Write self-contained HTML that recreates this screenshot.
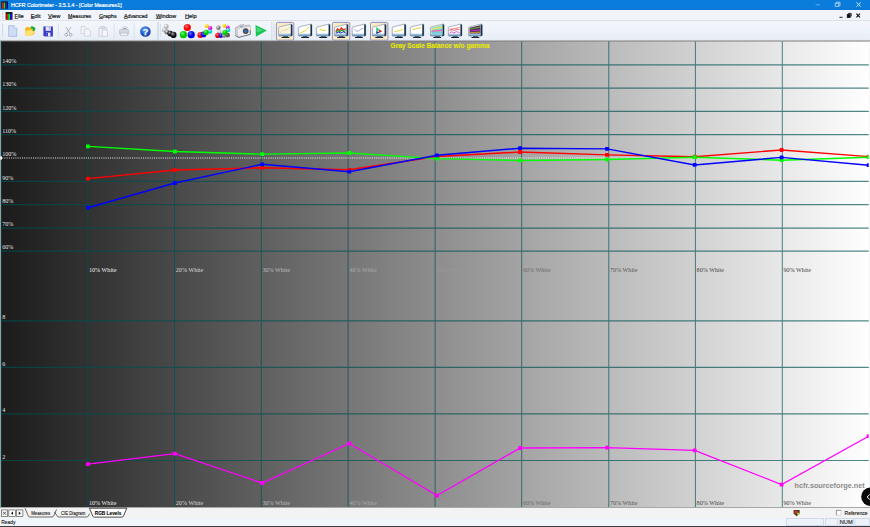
<!DOCTYPE html>
<html><head><meta charset="utf-8"><title>HCFR Colorimeter</title>
<style>
html,body{margin:0;padding:0}
body{width:870px;height:527px;overflow:hidden;position:relative;background:#eef2f9;font-family:"Liberation Sans",sans-serif;color:#000}
.abs{position:absolute}
svg{display:block}
#title{left:0;top:0;width:870px;height:10.1px;background:linear-gradient(#0a7ddc,#0a7ddc 80%,#0874d0)}
#title span{position:absolute;left:10.9px;top:2.2px;font-size:5.9px;line-height:7px;color:#fff;white-space:nowrap;transform:scaleX(0.885);transform-origin:0 0;-webkit-text-stroke:0.2px #fff}
#menu{left:0;top:10.1px;width:870px;height:10.2px;background:#f1f5fb}
#menu span{position:absolute;top:2.7px;font-size:5.7px;line-height:7px;white-space:nowrap;color:#111;-webkit-text-stroke:0.18px #111;transform-origin:0 0}
#menu u{text-decoration-thickness:0.4px;text-underline-offset:0.2px;text-decoration-color:rgba(0,0,0,0.6)}
#tbsvg{position:absolute;left:0;top:20px}
#chart{position:absolute;left:0;top:41px}
#ovl{position:absolute;left:0;top:0;pointer-events:none}
#tabs{left:0;top:507px;width:870px;height:11px;background:#f3f3f3;border-top:1px solid #a8a8a8;box-sizing:border-box}
#tabs span{position:absolute;top:2px;font-size:5.1px;line-height:6px;white-space:nowrap;color:#222}
#status{left:0;top:518px;width:870px;height:8px;background:#f0f4fb}
#status span{position:absolute;top:1px;font-size:5.6px;line-height:7px;white-space:nowrap;color:#111}
#bot{left:0;top:525.6px;width:870px;height:1.4px;background:#3c3c3c}
</style></head><body>
<div id="title" class="abs"><span>HCFR Colorimeter - 3.5.1.4 - [Color Measures1]</span></div>
<div id="menu" class="abs">
<span style="left:14.6px"><u>F</u>ile</span><span style="left:30.8px"><u>E</u>dit</span><span style="left:48.1px"><u>V</u>iew</span><span style="left:68.4px;transform:scaleX(0.93)"><u>M</u>easures</span><span style="left:99px;transform:scaleX(0.95)"><u>G</u>raphs</span><span style="left:124.3px;transform:scaleX(0.93)"><u>A</u>dvanced</span><span style="left:155.9px"><u>W</u>indow</span><span style="left:185px"><u>H</u>elp</span>
</div>
<svg id="tbsvg" viewBox="0 20 870 22" width="870" height="22"><defs><linearGradient id="tbg" x1="0" x2="0" y1="0" y2="1"><stop offset="0" stop-color="#f4f7fc"/><stop offset="0.5" stop-color="#eef3fa"/><stop offset="1" stop-color="#e6ecf5"/></linearGradient><radialGradient id="hb" cx="0.4" cy="0.3" r="0.8"><stop offset="0" stop-color="#5aa0f0"/><stop offset="0.6" stop-color="#1c5ad0"/><stop offset="1" stop-color="#0a2c90"/></radialGradient><radialGradient id="sr" cx="0.38" cy="0.32" r="0.75"><stop offset="0" stop-color="#ff7070"/><stop offset="0.55" stop-color="#f00000"/><stop offset="1" stop-color="#f00000"/></radialGradient><radialGradient id="sg" cx="0.38" cy="0.32" r="0.75"><stop offset="0" stop-color="#60ff60"/><stop offset="0.55" stop-color="#00c800"/><stop offset="1" stop-color="#00c800"/></radialGradient><radialGradient id="sb" cx="0.38" cy="0.32" r="0.75"><stop offset="0" stop-color="#6070ff"/><stop offset="0.55" stop-color="#0000e0"/><stop offset="1" stop-color="#0000e0"/></radialGradient><radialGradient id="sk" cx="0.38" cy="0.32" r="0.75"><stop offset="0" stop-color="#a0a0a0"/><stop offset="0.55" stop-color="#101010"/><stop offset="1" stop-color="#101010"/></radialGradient><radialGradient id="sw" cx="0.38" cy="0.32" r="0.75"><stop offset="0" stop-color="#ffffff"/><stop offset="0.55" stop-color="#b4b4b4"/><stop offset="1" stop-color="#b4b4b4"/></radialGradient><radialGradient id="sw2" cx="0.38" cy="0.32" r="0.75"><stop offset="0" stop-color="#e8e8e8"/><stop offset="0.55" stop-color="#787878"/><stop offset="1" stop-color="#787878"/></radialGradient><radialGradient id="sy" cx="0.38" cy="0.32" r="0.75"><stop offset="0" stop-color="#ffff90"/><stop offset="0.55" stop-color="#f0d000"/><stop offset="1" stop-color="#f0d000"/></radialGradient><radialGradient id="sm" cx="0.38" cy="0.32" r="0.75"><stop offset="0" stop-color="#ff90ff"/><stop offset="0.55" stop-color="#e000e0"/><stop offset="1" stop-color="#e000e0"/></radialGradient><radialGradient id="sc" cx="0.38" cy="0.32" r="0.75"><stop offset="0" stop-color="#a0ffff"/><stop offset="0.55" stop-color="#00c8d0"/><stop offset="1" stop-color="#00c8d0"/></radialGradient><linearGradient id="mon" x1="0" x2="0" y1="0" y2="1"><stop offset="0" stop-color="#f4f6f9"/><stop offset="0.72" stop-color="#e4ecf4"/><stop offset="0.9" stop-color="#8fb4d8"/><stop offset="1" stop-color="#5f8cbc"/></linearGradient></defs><rect x="0" y="20" width="870" height="22" fill="url(#tbg)"/><rect x="0" y="20" width="870" height="0.7" fill="#d4d8e0"/><rect x="157.2" y="22" width="1.6" height="18" fill="#c9d6ea" opacity="0.9"/><rect x="271" y="22" width="1.4" height="18" fill="#d5dfee" opacity="0.9"/><line x1="2.6" x2="2.6" y1="23.8" y2="36.6" stroke="#a8b4c8" stroke-width="0.9" stroke-dasharray="0.9 0.9"/><line x1="160.4" x2="160.4" y1="23.8" y2="36.6" stroke="#b4bed0" stroke-width="0.8" stroke-dasharray="0.9 0.9"/><line x1="274" x2="274" y1="23.8" y2="36.6" stroke="#b4bed0" stroke-width="0.8" stroke-dasharray="0.9 0.9"/><line x1="58.4" x2="58.4" y1="23.5" y2="38" stroke="#d3d9e4" stroke-width="0.7"/><line x1="114.2" x2="114.2" y1="23.5" y2="38" stroke="#d3d9e4" stroke-width="0.7"/><line x1="134.2" x2="134.2" y1="23.5" y2="38" stroke="#d3d9e4" stroke-width="0.7"/><path d="M8.6 25.6 L14 25.6 L16.8 28.4 L16.8 36.4 L8.6 36.4Z" fill="#cfdcf4" stroke="#9cb2e0" stroke-width="0.7"/><path d="M14 25.6 L14 28.4 L16.8 28.4" fill="#e8effb" stroke="#9cb2e0" stroke-width="0.5"/><path d="M25 28.2 L27.4 26.8 L30 27.6 L33.6 27.6 L35 30.4 L34.2 34.2 L31 35.6 L25.6 35.4Z" fill="#f6b820"/><path d="M25.4 31 L33.8 29.6 L35.2 30.8 L32 35.4 L25.8 35.6Z" fill="#ffe070"/><path d="M30.6 26.4 L33.4 26.4 L35.6 28.6 L34.6 30.8 L32.4 31.2 L33 29 L30.8 28.2Z" fill="#18a838"/><path d="M43.4 26.6 L52.9 26.6 L52.9 36.4 L44.6 36.4 L43.4 35.2Z" fill="#3a3ac6"/><rect x="45.6" y="26.6" width="5.2" height="4.2" fill="#e4e8f6"/><rect x="46" y="32.6" width="4.4" height="3.8" fill="#e8ecf8"/><rect x="46.2" y="32.8" width="1.8" height="3.4" fill="#3a3ac6"/><rect x="48.8" y="27.2" width="1" height="2.2" fill="#9aa0d8"/><g fill="none" stroke="#9aa0a8" stroke-width="0.8"><path d="M65.8 27 L70.4 33.6"/><path d="M71 27 L66.4 33.6"/><circle cx="66.2" cy="34.8" r="1.4"/><circle cx="70.6" cy="34.8" r="1.4"/></g><g fill="#f2f4f8" stroke="#c9ccd4" stroke-width="0.7"><path d="M81 26.6 L85 26.6 L87 28.6 L87 33.6 L81 33.6Z"/><path d="M84.4 29 L88.4 29 L90.6 31.2 L90.6 36.2 L84.4 36.2Z"/></g><g fill="#eceef3" stroke="#c6c9d2" stroke-width="0.7"><path d="M98.8 27.8 L106.8 27.8 L106.8 36.2 L98.8 36.2Z"/><rect x="101" y="26.6" width="3.6" height="1.8" fill="#dcdfe6"/><path d="M102.4 30 L105.8 30 L107.4 31.6 L107.4 36.4 L102.4 36.4Z" fill="#f6f7fa"/></g><g stroke="#b4b8c0" stroke-width="0.6"><path d="M121.6 30 L122.8 27 L127 27 L127.8 30Z" fill="#f4f5f8"/><path d="M119.4 30.4 Q119.4 29.6 120.4 29.6 L127.8 29.6 Q128.8 29.6 128.8 30.4 L128.8 34 L119.4 34Z" fill="#d4d7dd"/><path d="M120.6 33 L127.4 33 L127.4 35.6 L120.6 35.6Z" fill="#f0f1f4"/></g><rect x="123.4" y="28" width="2.6" height="0.8" fill="#7c8088"/><circle cx="145.4" cy="31.5" r="5.3" fill="url(#hb)"/><text x="145.5" y="34.7" text-anchor="middle" font-family="'Liberation Sans',sans-serif" font-weight="bold" font-size="9" fill="#fff" stroke="#fff" stroke-width="0.25">?</text><circle cx="166.2" cy="26.6" r="2.5" fill="url(#sw)"/><circle cx="164.6" cy="30" r="2.5" fill="url(#sw)"/><circle cx="167" cy="32" r="2.5" fill="url(#sw2)"/><circle cx="170.2" cy="33.6" r="2.8" fill="url(#sk)"/><circle cx="173.5" cy="34.9" r="3.1" fill="url(#sk)"/><circle cx="187.3" cy="27.5" r="3.6" fill="url(#sr)"/><circle cx="183.4" cy="34.7" r="3.6" fill="url(#sg)"/><circle cx="191.2" cy="34.7" r="3.6" fill="url(#sb)"/><circle cx="206.8" cy="26" r="2.1" fill="url(#sy)"/><circle cx="210.2" cy="28.2" r="2.1" fill="url(#sm)"/><circle cx="210" cy="31.6" r="2.2" fill="url(#sc)"/><circle cx="200.4" cy="35" r="3" fill="url(#sr)"/><circle cx="203.6" cy="34.4" r="2.8" fill="url(#sb)"/><circle cx="206.2" cy="32.4" r="2.6" fill="url(#sg)"/><circle cx="218.5" cy="27.8" r="2.2" fill="url(#sw2)"/><circle cx="219.4" cy="32.2" r="2" fill="url(#sw)"/><circle cx="224.5" cy="25.7" r="2" fill="url(#sy)"/><circle cx="227.7" cy="27.4" r="2" fill="url(#sm)"/><circle cx="228.2" cy="30.2" r="2.1" fill="url(#sc)"/><circle cx="217.8" cy="35.4" r="2.6" fill="url(#sr)"/><circle cx="221" cy="35.6" r="2.3" fill="url(#sb)"/><circle cx="227.6" cy="35.2" r="2.4" fill="#6a5a58"/><circle cx="224.2" cy="35.4" r="2.3" fill="url(#sw2)"/><circle cx="225" cy="32.4" r="2.6" fill="url(#sg)"/><path d="M235.4 27.8 L238 26.4 L240 25 L244 24.6 L245 25.6 L249.4 25 L250.2 26 L250.2 34.4 L238.6 37.4 L235.4 35.6Z" fill="#cfd0d4" stroke="#909296" stroke-width="0.5"/><path d="M237.6 28.9 L250 26.7 L250 34.3 L238.7 37.1Z" fill="#eeeef1"/><path d="M235.5 35.6 L238.6 37.4 L250.2 34.4 L250.2 30" fill="none" stroke="#5a5a5e" stroke-width="0.7"/><circle cx="245.7" cy="31.1" r="2.9" fill="#4c4c52"/><circle cx="245.7" cy="31.2" r="1.2" fill="#1a7ae8"/><rect x="240.2" y="26" width="2.6" height="1.2" fill="#8a9ab0"/><path d="M255.5 24.9 L266.8 30.6 L255.9 36.7Z" fill="#14c450"/><path d="M256.6 26.8 L263.6 30.4 L256.8 32.6Z" fill="#5fe08a" opacity="0.7"/><rect x="276.4" y="22.4" width="17.4" height="17.8" rx="1.4" fill="#fdebc2" stroke="#7476cc" stroke-width="0.8"/><path d="M279.3 26.9 L291.0 24.1 Q292.20000000000005 23.9 292.20000000000005 25 L292.20000000000005 35.2 Q292.20000000000005 36.1 291.20000000000005 36.1 L279.5 36.1 Q278.6 36.1 278.6 35.2 L278.6 27.8 Q278.6 27.1 279.3 26.9Z" fill="url(#mon)" stroke="#77828f" stroke-width="0.55"/><path d="M290.70000000000005 24.3 L292.3 24.7 L292.3 35.6 L290.70000000000005 36.1Z" fill="#14304e"/><path d="M279.6 27.8 L290.40000000000003 25.3 L290.40000000000003 33.6 L279.6 33.6Z" fill="#fbf3dc"/><rect x="283.0" y="36.1" width="5" height="1" fill="#3d5a7a"/><rect x="281.40000000000003" y="36.9" width="8" height="1" rx="0.3" fill="#1a222e"/><g transform="translate(278.6,0)"><path d="M2 32.5 Q4 29.5 6 30 T10.8 27.5" fill="none" stroke="#d8a060" stroke-width="0.7" stroke-dasharray="1.2 0.8"/></g><path d="M299.0 26.9 L310.7 24.1 Q311.90000000000003 23.9 311.90000000000003 25 L311.90000000000003 35.2 Q311.90000000000003 36.1 310.90000000000003 36.1 L299.2 36.1 Q298.3 36.1 298.3 35.2 L298.3 27.8 Q298.3 27.1 299.0 26.9Z" fill="url(#mon)" stroke="#77828f" stroke-width="0.55"/><path d="M310.40000000000003 24.3 L312.0 24.7 L312.0 35.6 L310.40000000000003 36.1Z" fill="#14304e"/><path d="M299.3 27.8 L310.1 25.3 L310.1 33.6 L299.3 33.6Z" fill="#ffffff"/><rect x="302.7" y="36.1" width="5" height="1" fill="#3d5a7a"/><rect x="301.1" y="36.9" width="8" height="1" rx="0.3" fill="#1a222e"/><g transform="translate(298.3,0)"><path d="M1.8 33 Q6.5 32 11 26.8" fill="none" stroke="#e0d800" stroke-width="0.9"/></g><path d="M317.09999999999997 26.9 L328.79999999999995 24.1 Q330.0 23.9 330.0 25 L330.0 35.2 Q330.0 36.1 329.0 36.1 L317.29999999999995 36.1 Q316.4 36.1 316.4 35.2 L316.4 27.8 Q316.4 27.1 317.09999999999997 26.9Z" fill="url(#mon)" stroke="#77828f" stroke-width="0.55"/><path d="M328.5 24.3 L330.09999999999997 24.7 L330.09999999999997 35.6 L328.5 36.1Z" fill="#14304e"/><path d="M317.4 27.8 L328.2 25.3 L328.2 33.6 L317.4 33.6Z" fill="#ffffff"/><rect x="320.79999999999995" y="36.1" width="5" height="1" fill="#3d5a7a"/><rect x="319.2" y="36.9" width="8" height="1" rx="0.3" fill="#1a222e"/><g transform="translate(316.4,0)"><path d="M3 30.2 Q4.6 28.8 6.2 30.2 T9.6 29.6" fill="none" stroke="#e0d000" stroke-width="0.9"/></g><rect x="332.4" y="22.4" width="17.4" height="17.8" rx="1.4" fill="#fdebc2" stroke="#7476cc" stroke-width="0.8"/><path d="M335.09999999999997 26.9 L346.79999999999995 24.1 Q348.0 23.9 348.0 25 L348.0 35.2 Q348.0 36.1 347.0 36.1 L335.29999999999995 36.1 Q334.4 36.1 334.4 35.2 L334.4 27.8 Q334.4 27.1 335.09999999999997 26.9Z" fill="url(#mon)" stroke="#77828f" stroke-width="0.55"/><path d="M346.5 24.3 L348.09999999999997 24.7 L348.09999999999997 35.6 L346.5 36.1Z" fill="#14304e"/><path d="M335.4 27.8 L346.2 25.3 L346.2 33.6 L335.4 33.6Z" fill="#ffffff"/><rect x="338.79999999999995" y="36.1" width="5" height="1" fill="#3d5a7a"/><rect x="337.2" y="36.9" width="8" height="1" rx="0.3" fill="#1a222e"/><g transform="translate(334.4,0)"><path d="M1.4 31.6 L3.2 28.8 L5 30.4 L7 27.8 L9 30 L11.4 28.8" fill="none" stroke="#e81808" stroke-width="1.15"/><path d="M1.4 32.4 L3.4 30.6 L5.4 31.8 L7.4 29.8 L9.4 31.6 L11.4 30.6" fill="none" stroke="#10a828" stroke-width="1.05"/><path d="M1.4 33.2 L4 32.2 L6.5 33 L9 31.8 L11.4 33" fill="none" stroke="#2030c8" stroke-width="1"/></g><path d="M352.8 26.9 L364.5 24.1 Q365.70000000000005 23.9 365.70000000000005 25 L365.70000000000005 35.2 Q365.70000000000005 36.1 364.70000000000005 36.1 L353.0 36.1 Q352.1 36.1 352.1 35.2 L352.1 27.8 Q352.1 27.1 352.8 26.9Z" fill="url(#mon)" stroke="#77828f" stroke-width="0.55"/><path d="M364.20000000000005 24.3 L365.8 24.7 L365.8 35.6 L364.20000000000005 36.1Z" fill="#14304e"/><path d="M353.1 27.8 L363.90000000000003 25.3 L363.90000000000003 33.6 L353.1 33.6Z" fill="#ffffff"/><rect x="356.5" y="36.1" width="5" height="1" fill="#3d5a7a"/><rect x="354.90000000000003" y="36.9" width="8" height="1" rx="0.3" fill="#1a222e"/><g transform="translate(352.1,0)"><path d="M2 29 Q4.5 32.8 7 30.6 T11.2 28.2" fill="none" stroke="#9a90e0" stroke-width="0.8"/></g><rect x="370.5" y="22.4" width="17.4" height="17.8" rx="1.4" fill="#fdebc2" stroke="#7476cc" stroke-width="0.8"/><path d="M373.09999999999997 26.9 L384.79999999999995 24.1 Q386.0 23.9 386.0 25 L386.0 35.2 Q386.0 36.1 385.0 36.1 L373.29999999999995 36.1 Q372.4 36.1 372.4 35.2 L372.4 27.8 Q372.4 27.1 373.09999999999997 26.9Z" fill="url(#mon)" stroke="#77828f" stroke-width="0.55"/><path d="M384.5 24.3 L386.09999999999997 24.7 L386.09999999999997 35.6 L384.5 36.1Z" fill="#14304e"/><path d="M373.4 27.8 L384.2 25.3 L384.2 33.6 L373.4 33.6Z" fill="#ffffff"/><rect x="376.79999999999995" y="36.1" width="5" height="1" fill="#3d5a7a"/><rect x="375.2" y="36.9" width="8" height="1" rx="0.3" fill="#1a222e"/><g transform="translate(372.4,0)"><path d="M3.9 27 L3.9 33.9 L9.6 31.4Z" fill="#20d040"/><path d="M3.9 33.9 L3.9 31.2 L6.4 31.6 L6.6 32.8Z" fill="#2030e8"/><path d="M9.6 31.4 L6.6 32.8 L6.4 31 L7.4 29.6Z" fill="#f02020"/><path d="M5 30.4 L6.6 30.2 L6.6 32 L5 32Z" fill="#f0c0f0"/><path d="M3.9 29.6 L5.6 29.6 L5 31.4 L3.9 31.2Z" fill="#20d0e0"/></g><path d="M392.9 26.9 L404.59999999999997 24.1 Q405.8 23.9 405.8 25 L405.8 35.2 Q405.8 36.1 404.8 36.1 L393.09999999999997 36.1 Q392.2 36.1 392.2 35.2 L392.2 27.8 Q392.2 27.1 392.9 26.9Z" fill="url(#mon)" stroke="#77828f" stroke-width="0.55"/><path d="M404.3 24.3 L405.9 24.7 L405.9 35.6 L404.3 36.1Z" fill="#14304e"/><path d="M393.2 27.8 L404.0 25.3 L404.0 33.6 L393.2 33.6Z" fill="#ffffff"/><rect x="396.59999999999997" y="36.1" width="5" height="1" fill="#3d5a7a"/><rect x="395.0" y="36.9" width="8" height="1" rx="0.3" fill="#1a222e"/><g transform="translate(392.2,0)"><path d="M2 31.8 L11 29.6" fill="none" stroke="#e6dc30" stroke-width="1"/></g><path d="M410.9 26.9 L422.59999999999997 24.1 Q423.8 23.9 423.8 25 L423.8 35.2 Q423.8 36.1 422.8 36.1 L411.09999999999997 36.1 Q410.2 36.1 410.2 35.2 L410.2 27.8 Q410.2 27.1 410.9 26.9Z" fill="url(#mon)" stroke="#77828f" stroke-width="0.55"/><path d="M422.3 24.3 L423.9 24.7 L423.9 35.6 L422.3 36.1Z" fill="#14304e"/><path d="M411.2 27.8 L422.0 25.3 L422.0 33.6 L411.2 33.6Z" fill="#ffffff"/><rect x="414.59999999999997" y="36.1" width="5" height="1" fill="#3d5a7a"/><rect x="413.0" y="36.9" width="8" height="1" rx="0.3" fill="#1a222e"/><g transform="translate(410.2,0)"><path d="M2.4 29.6 L10.8 27.6" fill="none" stroke="#e6d030" stroke-width="1"/></g><path d="M431.09999999999997 26.9 L442.79999999999995 24.1 Q444.0 23.9 444.0 25 L444.0 35.2 Q444.0 36.1 443.0 36.1 L431.29999999999995 36.1 Q430.4 36.1 430.4 35.2 L430.4 27.8 Q430.4 27.1 431.09999999999997 26.9Z" fill="url(#mon)" stroke="#77828f" stroke-width="0.55"/><path d="M442.5 24.3 L444.09999999999997 24.7 L444.09999999999997 35.6 L442.5 36.1Z" fill="#14304e"/><path d="M431.4 27.8 L442.2 25.3 L442.2 33.6 L431.4 33.6Z" fill="#7fe0c0"/><rect x="434.79999999999995" y="36.1" width="5" height="1" fill="#3d5a7a"/><rect x="433.2" y="36.9" width="8" height="1" rx="0.3" fill="#1a222e"/><g transform="translate(430.4,0)"><path d="M1.1 28.6 L11.6 26.6 L11.6 28 L1.1 29.8Z" fill="#f0e060"/><path d="M1.1 30.8 L11.6 29.6 L11.6 31 L1.1 31.9Z" fill="#f060c0"/><path d="M1.1 32.6 L11.6 32.2 L11.6 33.2 L1.1 33.4Z" fill="#60c8f0"/></g><path d="M449.0 26.9 L460.7 24.1 Q461.90000000000003 23.9 461.90000000000003 25 L461.90000000000003 35.2 Q461.90000000000003 36.1 460.90000000000003 36.1 L449.2 36.1 Q448.3 36.1 448.3 35.2 L448.3 27.8 Q448.3 27.1 449.0 26.9Z" fill="url(#mon)" stroke="#77828f" stroke-width="0.55"/><path d="M460.40000000000003 24.3 L462.0 24.7 L462.0 35.6 L460.40000000000003 36.1Z" fill="#14304e"/><path d="M449.3 27.8 L460.1 25.3 L460.1 33.6 L449.3 33.6Z" fill="#ffffff"/><rect x="452.7" y="36.1" width="5" height="1" fill="#3d5a7a"/><rect x="451.1" y="36.9" width="8" height="1" rx="0.3" fill="#1a222e"/><g transform="translate(448.3,0)"><path d="M1.1 28.8 L11.6 26.8 L11.6 28 L1.1 29.9Z" fill="#f0a0a0"/><path d="M1.4 30.4 L4 29.6 L6 30.4 L8.6 29.2 L11.4 29.8" fill="none" stroke="#d82020" stroke-width="0.7"/><path d="M1.4 32.8 L3.6 31.8 L5.6 32.8 L8 31.6 L11.4 32.6" fill="none" stroke="#e030d0" stroke-width="0.8"/></g><path d="M469.3 26.9 L481.0 24.1 Q482.20000000000005 23.9 482.20000000000005 25 L482.20000000000005 35.2 Q482.20000000000005 36.1 481.20000000000005 36.1 L469.5 36.1 Q468.6 36.1 468.6 35.2 L468.6 27.8 Q468.6 27.1 469.3 26.9Z" fill="url(#mon)" stroke="#77828f" stroke-width="0.55"/><path d="M480.70000000000005 24.3 L482.3 24.7 L482.3 35.6 L480.70000000000005 36.1Z" fill="#14304e"/><path d="M469.6 27.8 L480.40000000000003 25.3 L480.40000000000003 33.6 L469.6 33.6Z" fill="#4a2a5a"/><rect x="473.0" y="36.1" width="5" height="1" fill="#3d5a7a"/><rect x="471.40000000000003" y="36.9" width="8" height="1" rx="0.3" fill="#1a222e"/><g transform="translate(468.6,0)"><path d="M1.1 28.6 L11.6 26.6 L11.6 27.8 L1.1 29.6Z" fill="#70a030"/><path d="M1.1 30.4 L11.6 29.2 L11.6 30.4 L1.1 31.4Z" fill="#c030c0"/><path d="M1.1 32.2 L11.6 31.6 L11.6 32.8 L1.1 33.1Z" fill="#c8a020"/></g><rect x="0" y="39.9" width="870" height="0.8" fill="#c4c8d0" opacity="0.7"/><rect x="0" y="40.6" width="870" height="1.4" fill="#7a7a7a"/></svg>
<svg id="chart" viewBox="0 41 870 466" width="870" height="466">
<defs><linearGradient id="bg" x1="0" x2="1" y1="0" y2="0"><stop offset="0" stop-color="#1b1b1b"/><stop offset="1" stop-color="#ffffff"/></linearGradient></defs>
<rect x="0" y="41.5" width="870" height="465.5" fill="url(#bg)"/>
<g stroke="#005052" stroke-width="1" opacity="0.68">
<line x1="0" x2="870" y1="64.85" y2="64.85" stroke-width="1.2"/>
<line x1="0" x2="870" y1="88.05" y2="88.05" stroke-width="1.2"/>
<line x1="0" x2="870" y1="111.3" y2="111.3" stroke-width="1.2"/>
<line x1="0" x2="870" y1="134.7" y2="134.7" stroke-width="1.2"/>
<line x1="0" x2="870" y1="181.35" y2="181.35" stroke-width="1.2"/>
<line x1="0" x2="870" y1="204.7" y2="204.7" stroke-width="1.2"/>
<line x1="0" x2="870" y1="228.05" y2="228.05" stroke-width="1.2"/>
<line x1="0" x2="870" y1="251.2" y2="251.2" stroke-width="1.2"/>
<line x1="0" x2="870" y1="320.8" y2="320.8" stroke-width="1.2"/>
<line x1="0" x2="870" y1="367.4" y2="367.4" stroke-width="1.2"/>
<line x1="0" x2="870" y1="413.9" y2="413.9" stroke-width="1.2"/>
<line x1="0" x2="870" y1="460.5" y2="460.5" stroke-width="1.2"/>
<line x1="87.8" x2="87.8" y1="41.5" y2="507"/>
<line x1="174.6" x2="174.6" y1="41.5" y2="507"/>
<line x1="261.3" x2="261.3" y1="41.5" y2="507"/>
<line x1="348.1" x2="348.1" y1="41.5" y2="507"/>
<line x1="435.1" x2="435.1" y1="41.5" y2="507"/>
<line x1="521.7" x2="521.7" y1="41.5" y2="507"/>
<line x1="608.8" x2="608.8" y1="41.5" y2="507"/>
<line x1="695.4" x2="695.4" y1="41.5" y2="507"/>
<line x1="782.3" x2="782.3" y1="41.5" y2="507"/>
<line x1="1.3" x2="1.3" y1="41.5" y2="507"/>
</g>
<rect x="0" y="41" width="0.8" height="466" fill="#b4bcbc"/>
<line x1="0" x2="870" y1="158" y2="158" stroke="#ffffff" stroke-width="1" stroke-dasharray="1.1 1.1" opacity="0.85"/>
<rect x="0.4" y="156.3" width="1.6" height="3.3" fill="#fff"/>
<g font-family="'Liberation Serif',serif" font-size="6.1">
<text x="2.2" y="63.05" fill="#e4e4e4">140%</text>
<text x="2.2" y="86.25" fill="#e4e4e4">130%</text>
<text x="2.2" y="109.50" fill="#e4e4e4">120%</text>
<text x="2.2" y="132.90" fill="#e4e4e4">110%</text>
<text x="2.2" y="156.20" fill="#e4e4e4">100%</text>
<text x="2.2" y="179.55" fill="#e4e4e4">90%</text>
<text x="2.2" y="202.90" fill="#e4e4e4">80%</text>
<text x="2.2" y="226.25" fill="#e4e4e4">70%</text>
<text x="2.2" y="249.40" fill="#e4e4e4">60%</text>
<text x="2.2" y="319.00" fill="#e4e4e4">8</text>
<text x="2.2" y="365.60" fill="#e4e4e4">6</text>
<text x="2.2" y="412.10" fill="#e4e4e4">4</text>
<text x="2.2" y="458.70" fill="#e4e4e4">2</text>
<text x="89.0" y="272.2" fill="#ececec">10% White</text>
<text x="89.0" y="504.5" fill="#ececec">10% White</text>
<text x="175.79999999999998" y="272.2" fill="#d8d8d8">20% White</text>
<text x="175.79999999999998" y="504.5" fill="#d8d8d8">20% White</text>
<text x="262.5" y="272.2" fill="#bcbcbc">30% White</text>
<text x="262.5" y="504.5" fill="#bcbcbc">30% White</text>
<text x="349.3" y="272.2" fill="#a9a9a9">40% White</text>
<text x="349.3" y="504.5" fill="#a9a9a9">40% White</text>
<text x="436.3" y="272.2" fill="#9a9a9a">50% White</text>
<text x="436.3" y="504.5" fill="#9a9a9a">50% White</text>
<text x="522.9000000000001" y="272.2" fill="#6c6c6c">60% White</text>
<text x="522.9000000000001" y="504.5" fill="#6c6c6c">60% White</text>
<text x="610.0" y="272.2" fill="#585858">70% White</text>
<text x="610.0" y="504.5" fill="#585858">70% White</text>
<text x="696.6" y="272.2" fill="#4a4a4a">80% White</text>
<text x="696.6" y="504.5" fill="#4a4a4a">80% White</text>
<text x="783.5" y="272.2" fill="#444444">90% White</text>
<text x="783.5" y="504.5" fill="#444444">90% White</text>
</g>
<text x="390.5" y="48.4" font-family="'Liberation Sans',sans-serif" font-weight="bold" font-size="7" fill="#e6e600" stroke="#e6e600" stroke-width="0.15" textLength="99" lengthAdjust="spacingAndGlyphs">Gray Scale Balance w/o gamma</text>
<text x="794.6" y="487.9" font-family="'Liberation Sans',sans-serif" font-weight="bold" font-size="7.4" fill="#8a8a8a" textLength="70" lengthAdjust="spacingAndGlyphs">hcfr.sourceforge.net</text>
<polyline points="87.9,178.6 174.9,170 262.2,167.8 349.3,169.8 436.9,156.5 520.1,152 607,154.9 694.7,156.7 781.6,150 868.6,156.6" fill="none" stroke="#ff0000" stroke-width="1.45"/>
<polyline points="87.9,146.4 174.9,151.5 262.2,154.1 349.3,153 436.9,158.6 520.1,160.4 607,159.5 694.7,157.2 781.6,160.2 868.6,157.2" fill="none" stroke="#00ff00" stroke-width="1.45"/>
<polyline points="87.9,207.7 174.9,183 262.2,164.3 349.3,171.7 436.9,155.3 520.1,148.2 607,148.9 694.7,164.9 781.6,157.4 868.6,165.2" fill="none" stroke="#0000ff" stroke-width="1.45"/>
<rect x="86.00" y="176.70" width="3.8" height="3.8" rx="0.6" fill="#ff0000"/><rect x="173.00" y="168.10" width="3.8" height="3.8" rx="0.6" fill="#ff0000"/><rect x="260.30" y="165.90" width="3.8" height="3.8" rx="0.6" fill="#ff0000"/><rect x="347.40" y="167.90" width="3.8" height="3.8" rx="0.6" fill="#ff0000"/><rect x="435.00" y="154.60" width="3.8" height="3.8" rx="0.6" fill="#ff0000"/><rect x="518.20" y="150.10" width="3.8" height="3.8" rx="0.6" fill="#ff0000"/><rect x="605.10" y="153.00" width="3.8" height="3.8" rx="0.6" fill="#ff0000"/><rect x="692.80" y="154.80" width="3.8" height="3.8" rx="0.6" fill="#ff0000"/><rect x="779.70" y="148.10" width="3.8" height="3.8" rx="0.6" fill="#ff0000"/><rect x="866.70" y="154.70" width="3.8" height="3.8" rx="0.6" fill="#ff0000"/><rect x="86.00" y="144.50" width="3.8" height="3.8" rx="0.6" fill="#00ff00"/><rect x="173.00" y="149.60" width="3.8" height="3.8" rx="0.6" fill="#00ff00"/><rect x="260.30" y="152.20" width="3.8" height="3.8" rx="0.6" fill="#00ff00"/><rect x="347.40" y="151.10" width="3.8" height="3.8" rx="0.6" fill="#00ff00"/><rect x="435.00" y="156.70" width="3.8" height="3.8" rx="0.6" fill="#00ff00"/><rect x="518.20" y="158.50" width="3.8" height="3.8" rx="0.6" fill="#00ff00"/><rect x="605.10" y="157.60" width="3.8" height="3.8" rx="0.6" fill="#00ff00"/><rect x="692.80" y="155.30" width="3.8" height="3.8" rx="0.6" fill="#00ff00"/><rect x="779.70" y="158.30" width="3.8" height="3.8" rx="0.6" fill="#00ff00"/><rect x="866.70" y="155.30" width="3.8" height="3.8" rx="0.6" fill="#00ff00"/><rect x="86.00" y="205.80" width="3.8" height="3.8" rx="0.6" fill="#0000ff"/><rect x="173.00" y="181.10" width="3.8" height="3.8" rx="0.6" fill="#0000ff"/><rect x="260.30" y="162.40" width="3.8" height="3.8" rx="0.6" fill="#0000ff"/><rect x="347.40" y="169.80" width="3.8" height="3.8" rx="0.6" fill="#0000ff"/><rect x="435.00" y="153.40" width="3.8" height="3.8" rx="0.6" fill="#0000ff"/><rect x="518.20" y="146.30" width="3.8" height="3.8" rx="0.6" fill="#0000ff"/><rect x="605.10" y="147.00" width="3.8" height="3.8" rx="0.6" fill="#0000ff"/><rect x="692.80" y="163.00" width="3.8" height="3.8" rx="0.6" fill="#0000ff"/><rect x="779.70" y="155.50" width="3.8" height="3.8" rx="0.6" fill="#0000ff"/><rect x="866.70" y="163.30" width="3.8" height="3.8" rx="0.6" fill="#0000ff"/>
<polyline points="87.9,464.2 174.9,453.7 262.2,483 349.3,443.5 436.9,495.6 520.1,448 607,447.6 694.7,450.4 781.6,484.6 868.6,436.2" fill="none" stroke="#ff00ff" stroke-width="1.3"/>
<rect x="86.00" y="462.30" width="3.8" height="3.8" rx="0.6" fill="#ff00ff"/><rect x="173.00" y="451.80" width="3.8" height="3.8" rx="0.6" fill="#ff00ff"/><rect x="260.30" y="481.10" width="3.8" height="3.8" rx="0.6" fill="#ff00ff"/><rect x="347.40" y="441.60" width="3.8" height="3.8" rx="0.6" fill="#ff00ff"/><rect x="435.00" y="493.70" width="3.8" height="3.8" rx="0.6" fill="#ff00ff"/><rect x="518.20" y="446.10" width="3.8" height="3.8" rx="0.6" fill="#ff00ff"/><rect x="605.10" y="445.70" width="3.8" height="3.8" rx="0.6" fill="#ff00ff"/><rect x="692.80" y="448.50" width="3.8" height="3.8" rx="0.6" fill="#ff00ff"/><rect x="779.70" y="482.70" width="3.8" height="3.8" rx="0.6" fill="#ff00ff"/><rect x="866.70" y="434.30" width="3.8" height="3.8" rx="0.6" fill="#ff00ff"/>
<rect x="868.7" y="41.8" width="1.3" height="465" fill="#f8f8f8"/>
<circle cx="870.4" cy="496.8" r="9.2" fill="#0a0a0a"/>
<path d="M869.8 494.3 L867.2 497 L869.8 499.7" fill="none" stroke="#fff" stroke-width="1"/>
</svg>
<div id="tabs" class="abs">
</div>
<div id="status" class="abs"></div>
<div id="bot" class="abs"></div>
<svg id="ovl" viewBox="0 0 870 527" width="870" height="527">
<!-- title icon -->
<rect x="1.2" y="1.4" width="6.7" height="7.2" fill="#0c0c0c"/><rect x="1.8" y="2.5" width="1.5" height="6.1" fill="#ff1010"/><rect x="3.6" y="2.5" width="1.6" height="6.1" fill="#10e020"/><rect x="5.6" y="2.5" width="1.5" height="6.1" fill="#1018f0"/>
<!-- menu icon -->
<rect x="5.6" y="12.1" width="6.9" height="7.5" fill="#0c0c0c"/><rect x="6.3" y="13.7" width="1.6" height="5.9" fill="#ff1010"/><rect x="8.2" y="13.7" width="1.8" height="5.9" fill="#10e020"/><rect x="10.3" y="13.7" width="1.6" height="5.9" fill="#1018f0"/>
<line x1="2.6" x2="2.6" y1="12.4" y2="19" stroke="#a8b4c8" stroke-width="0.9" stroke-dasharray="0.9 0.9"/>
<!-- window controls -->
<g stroke="#cfe6fa" stroke-width="0.7" fill="none"><line x1="815.6" x2="820" y1="4.8" y2="4.8" stroke="#7fc0f0"/><rect x="835.2" y="3.2" width="3.6" height="3.4"/><path d="M836.4 3.2 L836.4 2.2 L840 2.2 L840 5.6 L838.8 5.6"/><path d="M856.4 2.3 L860.8 6.7 M860.8 2.3 L856.4 6.7" stroke="#fff" stroke-width="0.8"/></g>
<g stroke="#111" stroke-width="0.9" fill="none"><line x1="839.4" x2="842.6" y1="17.3" y2="17.3"/><rect x="847.3" y="14.6" width="2.8" height="2.8" fill="#111"/><path d="M848.4 14.2 L848.4 13.4 L851.2 13.4 L851.2 16.2 L850.4 16.2"/><path d="M856.4 13.6 L860 17.4 M860 13.6 L856.4 17.4" stroke-width="1.1"/></g>
<!-- tab strip -->
<g transform="translate(0,0.9)">
<g fill="#fafafa" stroke="#444" stroke-width="0.6"><rect x="1.3" y="509" width="6.4" height="6.6"/><rect x="8.8" y="509" width="6.6" height="6.6"/><rect x="16.3" y="509" width="6.6" height="6.6"/></g>
<path d="M3 510.8 L6 513.8 M6 510.8 L3 513.8" stroke="#111" stroke-width="0.7"/><path d="M13 510.6 L11 512.3 L13 514Z" fill="#111"/><path d="M18.8 510.6 L20.8 512.3 L18.8 514Z" fill="#111"/>
<g fill="none" stroke="#222" stroke-width="0.65"><path d="M25 507.4 L28.4 515.2 Q28.8 516.1 29.8 516.1 L52 516.1 Q53.2 516.1 53.7 515 L56.6 508.4"/><path d="M54.4 511 L57.2 515.2 Q57.8 516.1 58.8 516.1 L86.6 516.1 Q87.8 516.1 88.4 515 L89.4 512.8"/></g>
<path d="M89.4 507.3 L92.9 515.3 Q93.3 516.2 94.3 516.2 L122 516.2 Q123 516.2 123.4 515.3 L126.8 507.3Z" fill="#fff" stroke="#111" stroke-width="0.75"/>
<g font-family="'Liberation Sans',sans-serif" font-size="5.1" fill="#1a1a1a" stroke="#1a1a1a" stroke-width="0.12"><text x="31.3" y="514.5" textLength="18.8" lengthAdjust="spacingAndGlyphs">Measures</text><text x="61" y="514.5" textLength="24.2" lengthAdjust="spacingAndGlyphs">CIE Diagram</text><text x="94.7" y="514.5" font-weight="bold" fill="#000" textLength="26.8" lengthAdjust="spacingAndGlyphs">RGB Levels</text></g>
</g>
<!-- right widgets -->
<path d="M793.6 509.9 L799.6 509.9 L799.6 513.4 L796.6 516.2 L793.6 513.4Z" fill="#3a3a14"/><rect x="794.6" y="510.7" width="3" height="2.6" fill="#e03030"/><rect x="797.2" y="512.8" width="1.8" height="1.7" fill="#e8e020"/>
<rect x="836.4" y="510.3" width="4.6" height="4.8" fill="#fff" stroke="#b8b8b8" stroke-width="0.5"/><path d="M836.4 515.1 L836.4 510.3 L841 510.3" fill="none" stroke="#707070" stroke-width="0.6"/>
<g fill="#edf2fa" stroke="#bccbe4" stroke-width="0.6"><rect x="786.6" y="518.6" width="37" height="7"/><rect x="825.6" y="518.6" width="11.6" height="7"/><rect x="839" y="518.6" width="14.4" height="7"/><rect x="855" y="518.6" width="14.6" height="7"/></g>
<g font-family="'Liberation Sans',sans-serif" fill="#111" stroke="#111" stroke-width="0.1"><text x="844.6" y="514.9" font-size="5.4" textLength="23" lengthAdjust="spacingAndGlyphs">Reference</text><text x="1.2" y="524.2" font-size="5.6" textLength="14.2" lengthAdjust="spacingAndGlyphs">Ready</text><text x="839.8" y="524.3" font-size="5.4" textLength="12.8" lengthAdjust="spacingAndGlyphs">NUM</text></g>
</svg>
</body></html>
